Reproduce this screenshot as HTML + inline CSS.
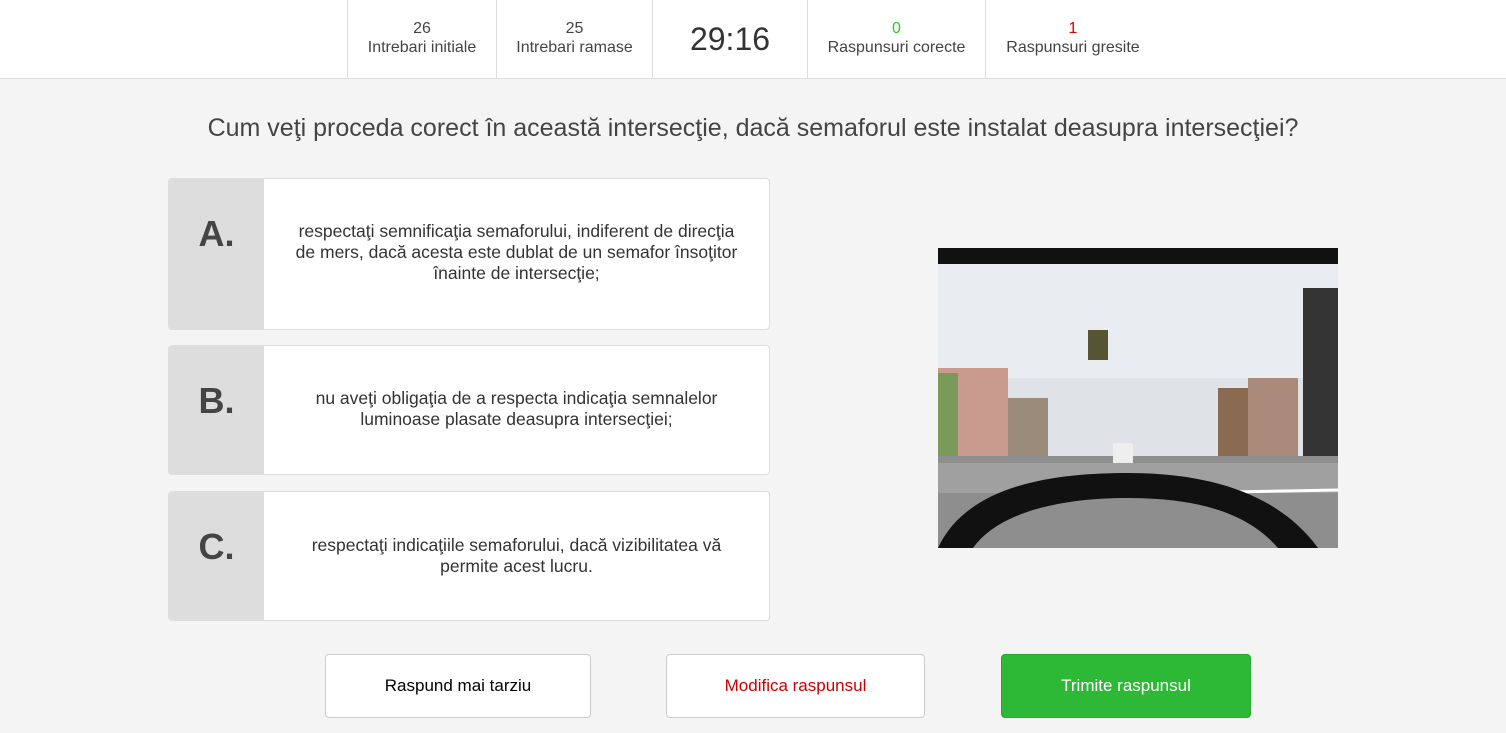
<!DOCTYPE html>
<html><head><meta charset="utf-8"><style>
*{margin:0;padding:0;box-sizing:border-box}
body{width:1506px;height:733px;background:#f4f4f4;font-family:"Liberation Sans",Arial,sans-serif;color:#444;position:relative;overflow:hidden}
.hdr{position:absolute;left:0;top:0;width:1506px;height:79px;background:#fff;border-bottom:1px solid #ddd}
.cell{position:absolute;top:0;height:78px;border-left:1px solid #ddd;text-align:center;font-size:16px;color:#444}
.cell .n{position:absolute;top:20px;left:0;right:0;line-height:18px}
.cell .l{position:absolute;top:39px;left:0;right:0;line-height:18px}
.q{position:absolute;top:114px;left:0;width:1506px;text-align:center;font-size:25px;color:#444}
.card{position:absolute;left:168px;width:602px;background:#fff;border:1px solid #ddd;border-radius:4px;overflow:hidden}
.card .let{position:absolute;left:0;top:0;bottom:0;width:95px;background:#ddd;font-size:36px;font-weight:bold;color:#444;text-align:center}
.card .t{position:absolute;left:95px;right:0;top:0;bottom:0;display:flex;align-items:center;justify-content:center;text-align:center;font-size:17.5px;line-height:21px;color:#333;padding:0 16px}
.btn{position:absolute;top:654px;height:64px;border:1px solid #ccc;border-radius:4px;background:#fff;font-size:17px;text-align:center;line-height:62px}
</style></head><body>
<div class="hdr">
<div class="cell" style="left:347px;width:149px"><div class="n">26</div><div class="l">Intrebari initiale</div></div>
<div class="cell" style="left:496px;width:156px"><div class="n">25</div><div class="l">Intrebari ramase</div></div>
<div class="cell" style="left:652px;width:155px"><div style="position:absolute;top:21px;left:0;right:0;font-size:32px;line-height:36px;color:#333">29:16</div></div>
<div class="cell" style="left:807px;width:178px"><div class="n" style="color:#2ec52e">0</div><div class="l">Raspunsuri corecte</div></div>
<div class="cell" style="left:985px;width:175px;border-right:none"><div class="n" style="color:#d00">1</div><div class="l">Raspunsuri gresite</div></div>
</div>
<div class="q">Cum veţi proceda corect în această intersecţie, dacă semaforul este instalat deasupra intersecţiei?</div>

<div class="card" style="top:178px;height:152px"><div class="let" style="line-height:110px">A.</div><div class="t" style="padding:0 24px 4px">respectaţi semnificaţia semaforului, indiferent de direcţia de mers, dacă acesta este dublat de un semafor însoţitor înainte de intersecţie;</div></div>
<div class="card" style="top:345px;height:130px"><div class="let" style="line-height:110px">B.</div><div class="t" style="padding:0 40px 2px">nu aveţi obligaţia de a respecta indicaţia semnalelor luminoase plasate deasupra intersecţiei;</div></div>
<div class="card" style="top:491px;height:130px"><div class="let" style="line-height:110px">C.</div><div class="t" style="padding:0 30px">respectaţi indicaţiile semaforului, dacă vizibilitatea vă permite acest lucru.</div></div>

<svg style="position:absolute;left:938px;top:248px" width="400" height="300" viewBox="0 0 400 300">
<rect width="400" height="300" fill="#dfe3e8"/>
<rect width="400" height="130" fill="#e9edf2"/>
<rect y="0" width="400" height="16" fill="#111"/>
<rect x="0" y="120" width="70" height="95" fill="#c89b8e"/>
<rect x="0" y="125" width="20" height="90" fill="#7a9a5a"/>
<rect x="70" y="150" width="40" height="65" fill="#9a8a7a"/>
<rect x="280" y="140" width="60" height="80" fill="#8a6a50"/>
<rect x="310" y="130" width="50" height="90" fill="#aa8a7a"/>
<rect x="365" y="40" width="35" height="180" fill="#333"/>
<rect x="150" y="82" width="20" height="30" fill="#553"/>
<rect x="0" y="208" width="400" height="92" fill="#8e8e8e"/>
<rect x="0" y="215" width="400" height="30" fill="#a0a0a0"/>
<path d="M240 245 L400 242" stroke="#fff" stroke-width="3"/>
<path d="M0 300 C30 235 120 225 190 225 C270 225 340 245 380 300 L340 300 C310 265 260 250 190 250 C120 250 60 265 35 300Z" fill="#111"/>
<rect x="175" y="195" width="20" height="20" fill="#eee"/>
</svg>

<div class="btn" style="left:325px;width:266px;color:#000">Raspund mai tarziu</div>
<div class="btn" style="left:666px;width:259px;color:#c00">Modifica raspunsul</div>
<div class="btn" style="left:1001px;width:250px;background:#2db835;border-color:#29a831;color:#fff">Trimite raspunsul</div>
</body></html>
